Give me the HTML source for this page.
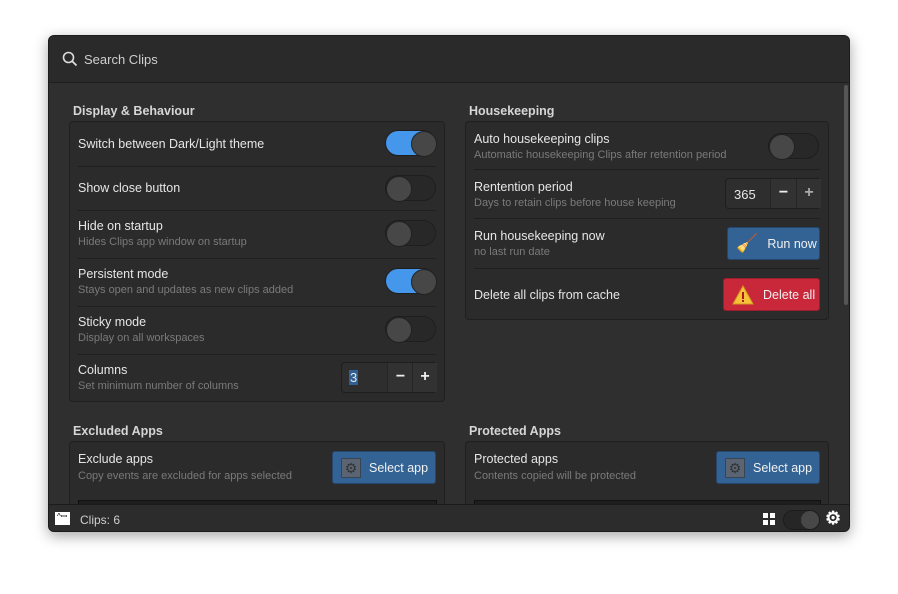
<!DOCTYPE html>
<html><head><style>
*{box-sizing:border-box;margin:0;padding:0}
body{width:898px;height:594px;background:#fff;font-family:"Liberation Sans",sans-serif;position:relative;overflow:hidden}
.win{position:absolute;left:48px;top:35px;width:802px;height:497px;background:#2f2f2f;border-radius:6px;overflow:hidden;box-shadow:0 4px 14px rgba(0,0,0,.35);border:1px solid #1c1c1c}
.hdr{position:absolute;left:0;top:0;width:100%;height:47px;background:#2a2a2a;border-bottom:1px solid #1e1e1e}
.a{position:absolute}
.t{position:absolute;color:#e6e6e6;font-size:12.5px;white-space:nowrap}
.s{position:absolute;color:#7a7a7a;font-size:11px;white-space:nowrap}
.h{position:absolute;color:#d6d6d6;font-size:12.5px;font-weight:bold}
.card{position:absolute;background:#2b2b2b;border:1px solid #1f1f1f;border-radius:4px}
.sep{position:absolute;height:1px;background:#1f1f1f}
.tg{position:absolute;width:51px;height:26px;border-radius:13px;background:#282828;border:1px solid #1e1e1e}
.tg::after{content:"";position:absolute;left:0;top:0;width:24px;height:24px;border-radius:50%;background:#474747;border:1px solid #222}
.tg.on{background:#4597ec}
.tg.on::after{left:25px}
.btn{position:absolute;border-radius:3px;color:#f0f0f0;font-size:12.5px;display:flex;align-items:center}
.blue{background:#336395;border:1px solid #25476c}
.num{position:absolute;border:1px solid #1e1e1e;border-radius:4px;background:#2e2e2e}
.num div{position:absolute;top:0;height:100%;border-left:1px solid #252525;background:#323232;color:#eee;font-size:16px;text-align:center;font-weight:bold}
.gb{width:20px;height:20px;background:#5a6473;border:1px solid #3a4350;margin:0 8px 0 8px;color:#333;font-size:14px;line-height:18px;text-align:center}
</style></head><body>
<div class="win">
 <div class="hdr">
  <svg class="a" style="left:13px;top:15px" width="16" height="16" viewBox="0 0 16 16"><circle cx="6.5" cy="6.5" r="5" fill="none" stroke="#ddd" stroke-width="1.6"/><path d="M10 10l4.5 4.5" stroke="#ddd" stroke-width="1.8"/></svg>
  <div class="t" style="left:35px;top:16px;color:#cfcfcf;font-size:13px">Search Clips</div>
 </div>
 <div class="a" style="left:795px;top:49px;width:4px;height:220px;background:#565656;border-radius:2px"></div>

 <div class="h" style="left:24px;top:68px">Display &amp; Behaviour</div>
 <div class="card" style="left:20px;top:85px;width:376px;height:281px"></div>
 <div class="t" style="left:29px;top:101px">Switch between Dark/Light theme</div>
 <div class="tg on" style="left:336px;top:94px"></div>
 <div class="sep" style="left:29px;top:130px;width:358px"></div>
 <div class="t" style="left:29px;top:145px">Show close button</div>
 <div class="tg" style="left:336px;top:139px"></div>
 <div class="sep" style="left:29px;top:174px;width:358px"></div>
 <div class="t" style="left:29px;top:183px">Hide on startup</div>
 <div class="s" style="left:29px;top:200px">Hides Clips app window on startup</div>
 <div class="tg" style="left:336px;top:184px"></div>
 <div class="sep" style="left:29px;top:222px;width:358px"></div>
 <div class="t" style="left:29px;top:231px">Persistent mode</div>
 <div class="s" style="left:29px;top:248px">Stays open and updates as new clips added</div>
 <div class="tg on" style="left:336px;top:232px"></div>
 <div class="sep" style="left:29px;top:270px;width:358px"></div>
 <div class="t" style="left:29px;top:279px">Sticky mode</div>
 <div class="s" style="left:29px;top:296px">Display on all workspaces</div>
 <div class="tg" style="left:336px;top:280px"></div>
 <div class="sep" style="left:29px;top:318px;width:358px"></div>
 <div class="t" style="left:29px;top:327px">Columns</div>
 <div class="s" style="left:29px;top:344px">Set minimum number of columns</div>
 <div class="num" style="left:292px;top:326px;width:96px;height:31px">
  <span class="a" style="left:7px;top:7px;background:#2f5f95;color:#e8e8e8;font-size:13px;padding:0 1px">3</span>
  <div style="left:45px;width:26px;line-height:28px">−</div><div style="left:70px;width:25px;line-height:28px">+</div>
 </div>

 <div class="h" style="left:420px;top:68px">Housekeeping</div>
 <div class="card" style="left:416px;top:85px;width:364px;height:199px"></div>
 <div class="t" style="left:425px;top:96px">Auto housekeeping clips</div>
 <div class="s" style="left:425px;top:113px">Automatic housekeeping Clips after retention period</div>
 <div class="tg" style="left:719px;top:97px"></div>
 <div class="sep" style="left:425px;top:133px;width:346px"></div>
 <div class="t" style="left:425px;top:144px">Rentention period</div>
 <div class="s" style="left:425px;top:161px">Days to retain clips before house keeping</div>
 <div class="num" style="left:676px;top:142px;width:96px;height:31px">
  <span class="a" style="left:8px;top:8px;color:#e8e8e8;font-size:13px">365</span>
  <div style="left:44px;width:26px;line-height:28px">−</div><div style="left:70px;width:25px;line-height:28px;color:#aaa">+</div>
 </div>
 <div class="sep" style="left:425px;top:182px;width:346px"></div>
 <div class="t" style="left:425px;top:193px">Run housekeeping now</div>
 <div class="s" style="left:425px;top:210px">no last run date</div>
 <div class="btn blue" style="left:678px;top:191px;width:93px;height:33px"><span style="font-size:18px;margin:0 9px 0 8px">🧹</span>Run now</div>
 <div class="sep" style="left:425px;top:232px;width:346px"></div>
 <div class="t" style="left:425px;top:252px">Delete all clips from cache</div>
 <div class="btn" style="left:674px;top:242px;width:97px;height:33px;background:#c8283a;border:1px solid #9a1e2b">
  <svg style="margin:0 9px 0 8px" width="22" height="20" viewBox="0 0 22 20"><path d="M11 1L21 19H1Z" fill="#f5c23a" stroke="#d59a1c"/><rect x="10" y="7" width="2" height="7" fill="#b1151f"/><rect x="10" y="15" width="2" height="2" fill="#b1151f"/></svg>Delete all</div>

 <div class="h" style="left:24px;top:388px">Excluded Apps</div>
 <div class="card" style="left:20px;top:405px;width:376px;height:120px"></div>
 <div class="t" style="left:29px;top:416px">Exclude apps</div>
 <div class="s" style="left:29px;top:434px">Copy events are excluded for apps selected</div>
 <div class="btn blue" style="left:283px;top:415px;width:104px;height:33px"><span class="gb">⚙</span>Select app</div>
 <div class="a" style="left:29px;top:464px;width:359px;height:20px;background:#1e1e1e;border:1px solid #111"></div>

 <div class="h" style="left:420px;top:388px">Protected Apps</div>
 <div class="card" style="left:416px;top:405px;width:364px;height:120px"></div>
 <div class="t" style="left:425px;top:416px">Protected apps</div>
 <div class="s" style="left:425px;top:434px">Contents copied will be protected</div>
 <div class="btn blue" style="left:667px;top:415px;width:104px;height:33px"><span class="gb">⚙</span>Select app</div>
 <div class="a" style="left:425px;top:464px;width:347px;height:20px;background:#1e1e1e;border:1px solid #111"></div>

 <div class="a" style="left:0;top:468px;width:100%;height:29px;background:#2c2c2c;border-top:1px solid #1c1c1c">
  <div class="a" style="left:6px;top:7px;width:15px;height:13px;background:#fff;color:#000;font-size:8px;line-height:10px;padding-left:2px">^ꟷ</div>
  <div class="t" style="left:31px;top:8px;color:#cfcfcf;font-size:12px">Clips: 6</div>
  <svg class="a" style="left:714px;top:8px" width="13" height="13"><rect x="0" y="0" width="5" height="5" fill="#fff"/><rect x="7" y="0" width="5" height="5" fill="#fff"/><rect x="0" y="7" width="5" height="5" fill="#fff"/><rect x="7" y="7" width="5" height="5" fill="#fff"/></svg>
  <div class="a" style="left:734px;top:5px;width:37px;height:20px;border-radius:10px;background:#262626;border:1px solid #1c1c1c"><div class="a" style="left:17px;top:0;width:18px;height:18px;border-radius:50%;background:#484848"></div></div>
  <div class="a" style="left:776px;top:3px;color:#fff;font-size:18px;font-weight:bold">⚙</div>
 </div>
</div>
</body></html>
